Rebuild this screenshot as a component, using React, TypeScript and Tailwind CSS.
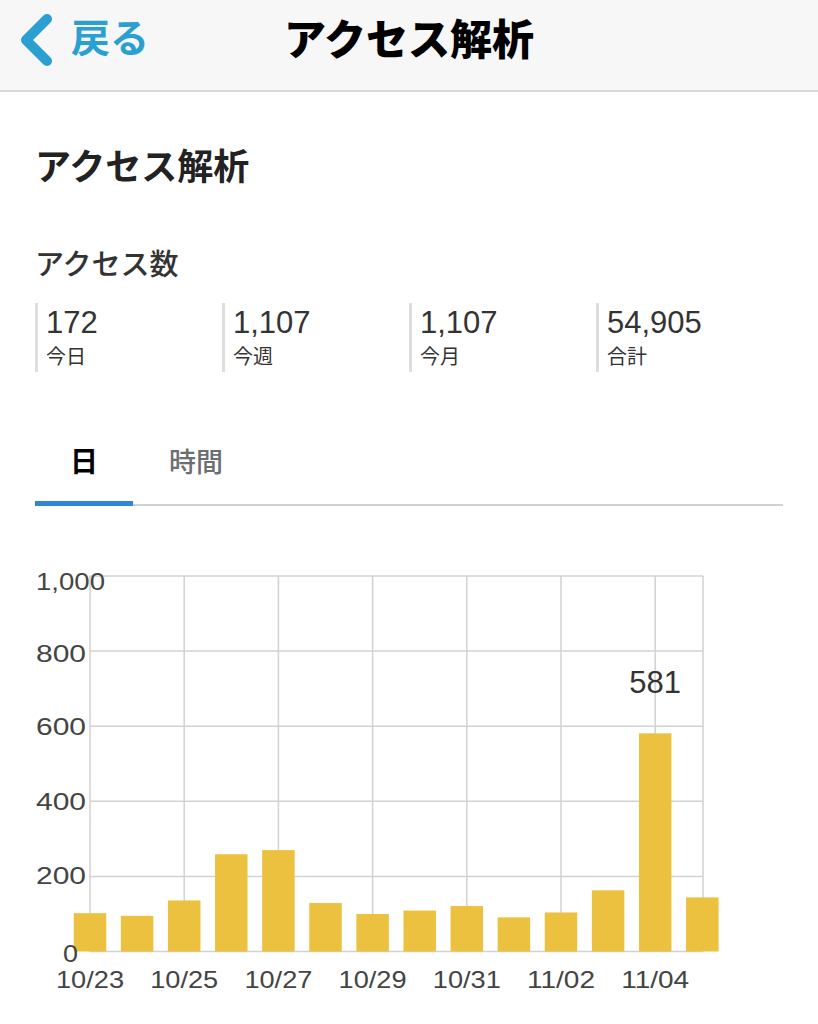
import React from 'react';

const FONT = "'Liberation Sans', 'Noto Sans CJK JP', sans-serif";

const stats = [
    {value: '172', label: '今日'},
    {value: '1,107', label: '今週'},
    {value: '1,107', label: '今月'},
    {value: '54,905', label: '合計'},
];

const days = ['10/23', '10/24', '10/25', '10/26', '10/27', '10/28', '10/29', '10/30', '10/31', '11/01', '11/02', '11/03', '11/04', '11/05'];
const counts = [102, 95, 136, 259, 270, 129, 100, 109, 121, 91, 104, 163, 581, 144];

// chart geometry, in svg coordinates (svg top sits at page y=540)
const LEFT = 90;
const RIGHT = 703;
const TOP = 36;
const BOTTOM = 411.5;
const STEP = 47.1;
const BAR_W = 32.5;
const yOf = (v: number) => BOTTOM - (v / 1000) * (BOTTOM - TOP);

const yLabels = [
    {text: '1,000', x: 36, y: 49.5, len: 69},
    {text: '800', x: 36, y: 122, len: 50},
    {text: '600', x: 36, y: 195, len: 50},
    {text: '400', x: 36, y: 270, len: 50},
    {text: '200', x: 36, y: 343.5, len: 50},
    {text: '0', x: 63, y: 422, len: 15},
];

function Chevron() {
    return (
        <svg width="34" height="52" viewBox="0 0 34 52" className="shrink-0">
            <path d="M28 5 L7 26 L28 47" fill="none" stroke="#2a9fd1" strokeWidth="10" strokeLinecap="round" strokeLinejoin="round"/>
        </svg>
    );
}

function Chart() {
    const grid = '#d2d2d2';
    return (
        <svg width="818" height="484" viewBox="0 0 818 484" className="block">
            {/* horizontal grid */}
            {[0, 200, 400, 600, 800, 1000].map((v) => (
                <line key={v} x1={LEFT} x2={RIGHT} y1={yOf(v)} y2={yOf(v)} stroke={grid} strokeWidth="1.5"/>
            ))}
            {/* vertical grid, every other day */}
            {days.map((d, i) => i % 2 === 0 ? (
                <line key={d} x1={LEFT + i * STEP} x2={LEFT + i * STEP} y1={TOP} y2={BOTTOM} stroke={grid} strokeWidth="1.5"/>
            ) : null)}
            <line x1={RIGHT} x2={RIGHT} y1={TOP} y2={BOTTOM} stroke={grid} strokeWidth="1.5"/>

            {counts.map((c, i) => (
                <rect key={i} x={LEFT + i * STEP - BAR_W / 2} y={yOf(c)} width={BAR_W} height={BOTTOM - yOf(c)} fill="#ecc13f"/>
            ))}

            {yLabels.map((l) => (
                <text key={l.text} x={l.x} y={l.y} fontSize="23" fill="#444" fontFamily={FONT}
                      textLength={l.len} lengthAdjust="spacingAndGlyphs">{l.text}</text>
            ))}

            {days.map((d, i) => i % 2 === 0 ? (
                <text key={d} x={LEFT + i * STEP} y={448} fontSize="24" fill="#444" fontFamily={FONT}
                      textAnchor="middle" textLength="68" lengthAdjust="spacingAndGlyphs">{d}</text>
            ) : null)}

            <text x={LEFT + 12 * STEP} y={152.7} fontSize="31" fill="#333" fontFamily={FONT} textAnchor="middle">581</text>
        </svg>
    );
}

export default function App() {
    return (
        <div className="w-[818px] h-[1024px] bg-white overflow-hidden" style={{fontFamily: FONT}}>
            {/* nav bar */}
            <div className="h-[92px] bg-[#f7f7f7] border-b-2 border-[#d9d9d9] grid grid-cols-[1fr_auto_1fr] items-start">
                <div className="flex items-start gap-[18px] pl-[19px] pt-[14px]">
                    <Chevron/>
                    <span className="text-[39px] leading-[39px] mt-[5px] text-[#2a9fd1] font-bold">戻る</span>
                </div>
                <h1 className="pt-[20px] text-[42px] leading-[42px] font-black text-black">アクセス解析</h1>
                <div/>
            </div>

            <div className="px-[35px]">
                <h2 className="mt-[58px] text-[36px] leading-[36px] font-semibold text-[#222]">アクセス解析</h2>

                <h3 className="mt-[65px] text-[29px] leading-[29px] font-medium text-[#333]">アクセス数</h3>

                <div className="mt-[23px] grid grid-cols-4">
                    {stats.map((s) => (
                        <div key={s.label} className="border-l-[3px] border-[#dedede] pl-[8px] pt-[3px] pb-[3px]">
                            <div className="text-[31px] leading-[34px] text-[#333]">{s.value}</div>
                            <div className="mt-[5px] text-[20px] leading-[24px] text-[#333]">{s.label}</div>
                        </div>
                    ))}
                </div>

                <div className="mt-[77px] flex border-b-2 border-[#cfd2d5]">
                    <button className="px-[35px] pb-[24px] -mb-[2px] border-b-[5px] border-[#2f86d4] text-[28px] leading-[28px] font-semibold text-black">
                        日
                    </button>
                    <button className="px-[36px] pb-[24px] -mb-[2px] border-b-[5px] border-transparent text-[27px] leading-[28px] font-medium text-[#6b6e72]">
                        時間
                    </button>
                </div>
            </div>

            <div className="mt-[34px]">
                <Chart/>
            </div>
        </div>
    );
}
